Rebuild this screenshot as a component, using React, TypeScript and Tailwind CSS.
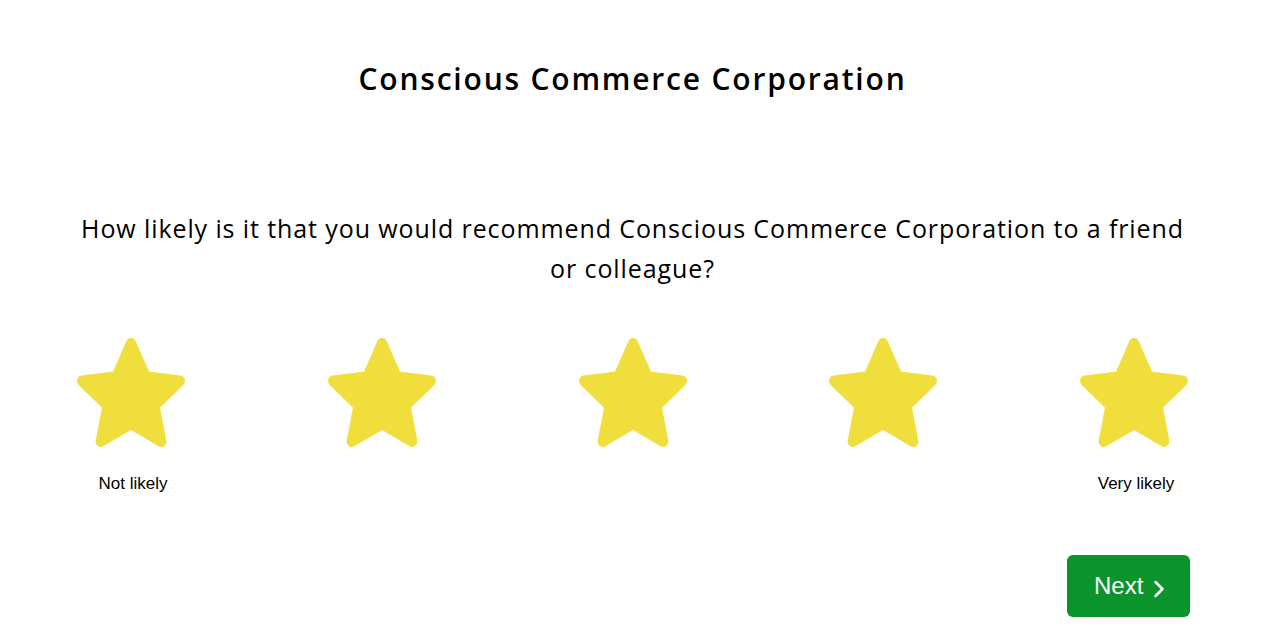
import { ChevronRight } from 'lucide-react';

const ratings = [
  { value: 1, label: 'Not likely' },
  { value: 2, label: '' },
  { value: 3, label: '' },
  { value: 4, label: '' },
  { value: 5, label: 'Very likely' },
];

function Star() {
  return (
    <svg
      width="108"
      height="109"
      viewBox="-52.55 -55 105.1 100.45"
      preserveAspectRatio="none"
      aria-hidden="true"
    >
      <polygon
        points="0,-50 14.11,-19.42 47.55,-15.45 22.83,7.42 29.39,40.45 0,24 -29.39,40.45 -22.83,7.42 -47.55,-15.45 -14.11,-19.42"
        fill="#efde3b"
        stroke="#efde3b"
        strokeWidth="10"
        strokeLinejoin="round"
      />
    </svg>
  );
}

export default function App() {
  return (
    <div className="w-[1265px] min-h-[635px] bg-white">
      <div className="mx-auto w-[1111px] flex flex-col items-center">
        {/* Header */}
        <h1 className="mt-[59px] text-[30px] leading-[40px] font-semibold text-black font-['Open_Sans',sans-serif] tracking-[1.8px]">
          Conscious Commerce Corporation
        </h1>

        {/* Question */}
        <p className="mt-[109px] text-center text-[25px] leading-[40px] text-black font-['Open_Sans',sans-serif] tracking-[0.9px] px-[4px]">
          How likely is it that you would recommend Conscious Commerce Corporation to a friend or colleague?
        </p>

        {/* Stars */}
        <div className="mt-[50px] w-full flex justify-between">
          {ratings.map((r) => (
            <button key={r.value} className="w-[108px] flex flex-col items-center cursor-pointer">
              <Star />
              <span className="mt-[25px] pl-[4px] h-[24px] whitespace-nowrap text-[17px] leading-[24px] text-black font-['Liberation_Sans',Arial,sans-serif]">
                {r.label}
              </span>
            </button>
          ))}
        </div>

        {/* Footer */}
        <div className="mt-[59px] w-full flex justify-end">
          <button className="-mr-[2px] w-[123px] h-[62px] pl-[27px] rounded-[6px] bg-[#0c942c] text-white flex items-center font-['Liberation_Sans',Arial,sans-serif] text-[24px]">
            <span>Next</span>
            <ChevronRight className="w-[28px] h-[28px] ml-[2px] mt-[5px]" strokeWidth={2.2} />
          </button>
        </div>
      </div>
    </div>
  );
}
